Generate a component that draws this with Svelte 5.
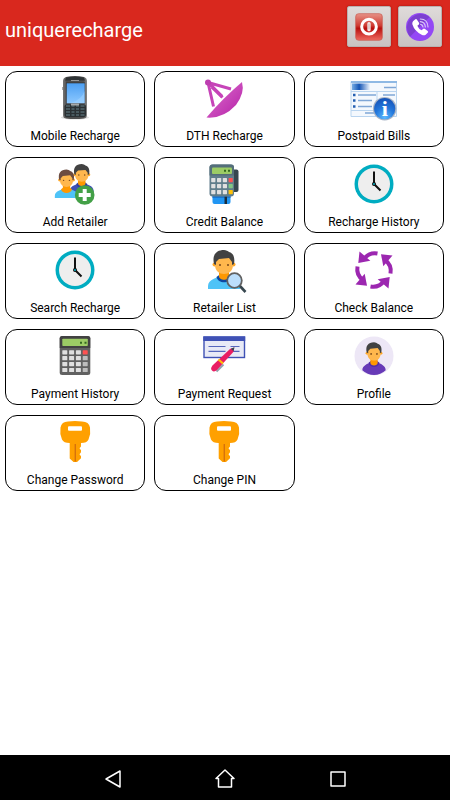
<script>
  const tiles = [
    { label: "Mobile Recharge", icon: "phone" },
    { label: "DTH Recharge", icon: "dish" },
    { label: "Postpaid Bills", icon: "bill" },
    { label: "Add Retailer", icon: "addUser" },
    { label: "Credit Balance", icon: "terminal" },
    { label: "Recharge History", icon: "clock" },
    { label: "Search Recharge", icon: "clock" },
    { label: "Retailer List", icon: "findUser" },
    { label: "Check Balance", icon: "cycle" },
    { label: "Payment History", icon: "calculator" },
    { label: "Payment Request", icon: "cheque" },
    { label: "Profile", icon: "profile" },
    { label: "Change Password", icon: "key" },
    { label: "Change PIN", icon: "key" },
  ];

  const terminalKeys = ["#e0e0e0", "#e0e0e0", "#e0e0e0"];
  const terminalSide = ["#ff5252", "#81c784", "#ffc107"];
</script>

{#snippet person(hair, shirt, collar)}
  <path d="M8 43v-3c0-7 10-8 13-11h6c3 3 13 4 13 11v3z" fill={shirt} />
  <path d="M16.500 31c1.500 7 13.500 7 15 0l-4-3h-7z" fill={collar} />
  <path d="M19 24h10v6c0 5-10 5-10 0z" fill="#ff9800" />
  <circle cx="14.500" cy="18.500" r="2" fill="#ffa726" />
  <circle cx="33.500" cy="18.500" r="2" fill="#ffa726" />
  <path d="M15 13c0-8 18-8 18 0v6c0 12-18 12-18 0z" fill="#ffb74d" />
  <path d="M14 18c-2-9 2-14 10-14 2 0 4 1 5 2 5 1 6 7 5 12l-2 1v-3l-3-4-10 1-3 3v3z" fill={hair} />
  <circle cx="20" cy="19" r="1" fill="#784719" />
  <circle cx="28" cy="19" r="1" fill="#784719" />
{/snippet}

{#snippet icon(name)}
  <svg class="icon" viewBox="0 0 48 48" aria-hidden="true">
    {#if name === "phone"}
      <defs>
        <linearGradient id="screen" x1="0" y1="0" x2="0" y2="1">
          <stop offset="0" stop-color="#4c9ff2" />
          <stop offset="1" stop-color="#8cc8ff" />
        </linearGradient>
        <linearGradient id="shell" x1="0" y1="0" x2="1" y2="0">
          <stop offset="0" stop-color="#777" />
          <stop offset="0.150" stop-color="#4c4c4c" />
          <stop offset="0.850" stop-color="#505050" />
          <stop offset="1" stop-color="#888" />
        </linearGradient>
      </defs>
      <ellipse cx="24" cy="43.500" rx="14" ry="2" fill="#ddd" />
      <rect x="11.500" y="13" width="2" height="3" fill="#555" />
      <path d="M15 3q9-2 18 0 3 1 3 4v34q0 3-3 3.500-9 1-18 0-3-.5-3-3.500V7q0-3 3-4z" fill="url(#shell)" />
      <path d="M15.500 3.500q8.500-1.500 17 0l1.500 3H14z" fill="#303436" />
      <path d="M20 6.500h8" stroke="#999" />
      <rect x="15" y="8.500" width="19" height="21" fill="#333" />
      <rect x="15.700" y="9.300" width="18" height="20" fill="url(#screen)" />
      <path d="M33.500 17v12H20q11-4 13.500-12z" fill="#a5d5ff" opacity="0.500" />
      <rect x="13.500" y="30.500" width="21.500" height="12.500" rx="2" fill="#2a3033" />
      {#each [32, 35, 38, 41] as y}
        <path d="M15 {y}h4M20.500 {y}h3M25 {y}h3M29.500 {y}h4" stroke="#67818a" />
      {/each}
      <path d="M20 30.500h8" stroke="#a8aaaa" stroke-width="2" />
    {:else if name === "dish"}
      <defs>
        <linearGradient id="dish" x1="0" y1="0" x2="1" y2="1">
          <stop offset="0" stop-color="#df72cf" />
          <stop offset="1" stop-color="#b420a7" />
        </linearGradient>
      </defs>
      <path d="M8 8.500l23 6.500M8 8.500l5.500 24M9 9l13.500 14.500" fill="none" stroke="#c644b8" stroke-width="3" />
      <path d="M12 13l10 9.500" stroke="#c644b8" stroke-width="3.500" />
      <circle cx="8" cy="8.500" r="3" fill="#bd3eb0" />
      <path d="M42 8q3 11-6 23Q23 45 6.500 43.500q16-19 35.500-35.500z" fill="url(#dish)" />
    {:else if name === "bill"}
      <defs>
        <linearGradient id="banner" x1="0" y1="0" x2="1" y2="0">
          <stop offset="0" stop-color="#78aee5" />
          <stop offset="0.400" stop-color="#1455b5" />
          <stop offset="1" stop-color="#eff6fd" />
        </linearGradient>
        <radialGradient id="info" cx="0.500" cy="0.900" r="0.900">
          <stop offset="0" stop-color="#5cb9ff" />
          <stop offset="0.500" stop-color="#2478dc" />
          <stop offset="1" stop-color="#1452b8" />
        </radialGradient>
      </defs>
      <path d="M1 7.500h45.500v35H1z" fill="#f4f8fd" stroke="#b9d4ef" />
      <path d="M1 8h46" stroke="#8fb9e4" stroke-width="2" />
      <rect x="2" y="9.500" width="18" height="6.500" fill="url(#banner)" />
      <path d="M1 17.500h46M1 36.500h28M27 18v10" stroke="#b9d4ef" />
      <path d="M34 13.500h12M8 21h18M8 26.500h14M8 32.500h14M33 21h12M15 39h10" stroke="#7fa6d6" stroke-width="1.300" />
      <path d="M3 21h2.500M3 26.500h2.500M3 32.500h2.500" stroke="#235fb2" stroke-width="2.500" />
      <circle cx="34.700" cy="34.700" r="11.800" fill="#a9b4c5" />
      <circle cx="34.700" cy="34.700" r="10.600" fill="url(#info)" />
      <text x="34.700" y="42" text-anchor="middle" class="info">i</text>
    {:else if name === "addUser"}
      <g transform="translate(13 1) scale(0.740)">{@render person("#424242", "#3f51b5", "#303f9f")}</g>
      <g transform="translate(-2 6.500) scale(0.730)">{@render person("#6d4c41", "#4fc3f7", "#ff9800")}</g>
      <circle cx="33.700" cy="35" r="9.800" fill="#43a047" />
      <path d="M33.700 29v12M27.700 35h12" stroke="#fff" stroke-width="4" />
    {:else if name === "terminal"}
      <path d="M34 9.500h2.500q2 0 2 2V30q0 2-2 2H34z" fill="#37474f" />
      <path d="M12.500 35h18v7q0 2-2 2h-14q-2 0-2-2z" fill="#2196f3" />
      <path d="M12.500 36h18v2h-18z" fill="#1976d2" />
      <path d="M24.500 36.500H27V44h-2.500z" fill="#1a2d3d" />
      <path d="M12.500 4.500h18.500q3 0 3 3v26q0 3-3 3H12.500q-3 0-3-3v-26q0-3 3-3z" fill="#607d8b" />
      <path d="M9.500 15.500v-8q0-3 3-3h18.500q3 0 3 3v8z" fill="#546e7a" />
      <rect x="12" y="7.500" width="20" height="6.500" rx="1" fill="#9ccc65" />
      <path d="M24 10.700h2M28 10.700h2" stroke="#33691e" stroke-width="2" />
      {#each terminalSide as side, row}
        {#each [...terminalKeys, side] as fill, col}
          <rect x={11.2 + col * 5.8} y={18 + row * 6} width="4.200" height="4.200" rx="0.600" {fill} />
        {/each}
      {/each}
    {:else if name === "clock"}
      <circle cx="24" cy="24" r="19.500" fill="#00acc1" />
      <circle cx="24" cy="24" r="16" fill="#eee" />
      <path d="M24 24V11.500M24 24l6.500 6.500" stroke="#111" stroke-width="2" />
      <circle cx="24" cy="24" r="2" fill="#111" />
      <circle cx="24" cy="24" r="1" fill="#00acc1" />
    {:else if name === "findUser"}
      {@render person("#424242", "#4fc3f7", "#0d47a1")}
      <path d="M39 39l6.500 7" stroke="#37474f" stroke-width="2.600" />
      <circle cx="34.500" cy="34.500" r="7.300" fill="#bbdefb" stroke="#616161" stroke-width="1.800" />
    {:else if name === "cycle"}
      {#each [0, 90, 180, 270] as turn}
        <g transform="rotate({turn} 24 24)">
          <path d="M27.500 7.500Q19 6 14 13" fill="none" stroke="#9c27b0" stroke-width="4" />
          <path d="M9.500 5.500L8.300 17l12-2.300z" fill="#9c27b0" />
        </g>
      {/each}
    {:else if name === "calculator"}
      <rect x="8.700" y="4" width="30.600" height="39" rx="2.500" fill="#616161" />
      <path d="M8.700 16V6.500q0-2.500 2.500-2.500h25.600q2.500 0 2.500 2.500V16z" fill="#424242" />
      <rect x="11.300" y="6.700" width="25.500" height="7.300" rx="0.800" fill="#9ccc65" />
      <path d="M29 10.800h2M33.500 10.800h2" stroke="#33691e" stroke-width="2" />
      {#each [0, 1, 2, 3] as row}
        {#each [0, 1, 2, 3] as col}
          <rect
            x={11.3 + col * 6.8}
            y={18.2 + row * 5.9}
            width="5"
            height="4.200"
            rx="0.600"
            fill={col < 3 ? "#e0e0e0" : row === 0 ? "#ff5252" : "#bdbdbd"} />
        {/each}
      {/each}
    {:else if name === "cheque"}
      <rect x="4" y="5" width="40.500" height="20.500" fill="#e8eaf6" stroke="#3f51b5" stroke-width="1.400" />
      <path d="M3.300 4.500h41.900V9H3.300z" fill="#3f51b5" />
      <path d="M8.500 14.500h17M8.500 19.300h17M30.500 14.500h9M32 19.300h7.500" stroke="#5667bd" stroke-width="1.200" />
      <path d="M23.500 32.500l-7 7" stroke="#90a4ae" stroke-width="2" />
      <path d="M34.300 15.500l-1 4.500L17 38q-3 2.500-5 .5t.5-5L30 17z" fill="#e91e63" />
      <path d="M34.500 15.300l-1 4-2.800-2.500z" fill="#37474f" />
      <path d="M18.500 27.500l4.500 4" stroke="#ffc107" stroke-width="2.200" />
    {:else if name === "profile"}
      <circle cx="24" cy="24" r="19.500" fill="#ede7f6" />
      <g transform="translate(6.500 7.300) scale(0.730)">
        <path d="M8 42.500c0-7 8-9 11-11h10c3 2 11 4 11 11Q33 49 24 49T8 42.500z" fill="#673ab7" />
        <path d="M16.500 32c2 8 13 8 15 0l-4-3h-7z" fill="#512da8" />
        <path d="M19 24h10v8c0 5-10 5-10 0z" fill="#ff9800" />
        <circle cx="14.500" cy="19" r="2" fill="#ffa726" />
        <circle cx="33.500" cy="19" r="2" fill="#ffa726" />
        <path d="M15 13c0-8 18-8 18 0v7c0 12-18 12-18 0z" fill="#ffb74d" />
        <path d="M14 18c-2-9 2-14 10-14 2 0 4 1 5 2 5 1 6 7 5 12l-2 1v-3l-3-4-10 1-3 3v3z" fill="#424242" />
        <circle cx="20" cy="20" r="1.200" fill="#784719" />
        <circle cx="28" cy="20" r="1.200" fill="#784719" />
      </g>
    {:else if name === "key"}
      <path
        d="M17 3.500q7-1 14 0 7 0 8 6 1 6-1.500 12Q36 25 30 25v3.500l-1.500 1.800 1.500 2v2l-1.500 2 1.500 2v2L26 44h-3.500l-3.800-3.500V25q-6 0-7.700-3.500-2.500-6-1.500-12 1-6 7.500-6z"
        fill="#ffa000" />
      <rect x="17" y="8.300" width="14" height="4.400" rx="1" fill="#fff" />
      <path d="M24.300 26v17.500" stroke="#d6720b" stroke-width="1.400" />
    {/if}
  </svg>
{/snippet}

<div class="screen">
  <header>
    <h1>uniquerecharge</h1>
    <div class="actions">
      <button class="action" aria-label="Log out">
        <svg viewBox="0 0 84 84" aria-hidden="true">
          <defs>
            <linearGradient id="power" x1="0" y1="0" x2="0" y2="1">
              <stop offset="0" stop-color="#e79287" />
              <stop offset="0.450" stop-color="#cf3a31" />
              <stop offset="0.550" stop-color="#b90f0d" />
              <stop offset="1" stop-color="#ef6a60" />
            </linearGradient>
          </defs>
          <rect x="2" y="2" width="80" height="80" rx="9" fill="url(#power)" stroke="#c8574d" stroke-width="2" />
          <circle cx="42" cy="41" r="22" fill="none" stroke="#fff" stroke-width="9" />
          <path d="M42 32v18" stroke="#f4e8e6" stroke-width="10" stroke-linecap="round" />
          <path d="M42 32v17" stroke="#c8b0ae" stroke-width="3" />
        </svg>
      </button>
      <button class="action" aria-label="Call support">
        <svg viewBox="0 0 84 84" aria-hidden="true">
          <circle cx="42" cy="42" r="42" fill="#9448f5" />
          <path d="M12 71A42 42 0 0 1 71 12z" fill="#7c3fd0" />
          <path
            d="M21 25l7-6q3-2 5 1l6 9q2 3-1 6l-4 3q4 10 13 14l4-4q3-3 6 0l8 6q3 3 0 5l-6 6q-5 3-12 0-21-9-28-31-1-5 2-9z"
            fill="#fff" />
          <g fill="none" stroke="#dcc8f8" stroke-width="3.500" stroke-linecap="round">
            <path d="M43 18q22 0 23 24M43 26q14 1 15 16M44 34q6 1 7 8" />
          </g>
        </svg>
      </button>
    </div>
  </header>

  <main>
    {#each tiles as tile}
      <button class="tile">
        {@render icon(tile.icon)}
        <span>{tile.label}</span>
      </button>
    {/each}
  </main>

  <nav>
    <button aria-label="Back">
      <svg viewBox="0 0 24 24"><path d="M19 4v16L5 12z" /></svg>
    </button>
    <button aria-label="Home">
      <svg viewBox="0 0 24 24"><path d="M12 3l9 8.500h-2.500V20h-13v-8.500H3z" /></svg>
    </button>
    <button aria-label="Recent apps">
      <svg viewBox="0 0 24 24"><path d="M5 5h14v14H5z" /></svg>
    </button>
  </nav>
</div>

<style>
  :global(body) {
    background: #fff;
  }

  .screen {
    display: flex;
    flex-direction: column;
    min-height: 100vh;
    font-family: Roboto, "Liberation Sans", sans-serif;
  }

  button {
    margin: 0;
    font: inherit;
    color: inherit;
    cursor: pointer;
  }

  header {
    display: flex;
    align-items: flex-start;
    justify-content: space-between;
    box-sizing: border-box;
    min-height: 66px;
    padding: 6px 8px 0 5px;
    background: #d9281e;
  }

  h1 {
    margin: 0;
    padding-top: 12px;
    font-size: 20px;
    font-weight: 400;
    line-height: 24px;
    color: #fff;
  }

  .actions {
    display: flex;
    gap: 7px;
  }

  .action {
    display: flex;
    align-items: center;
    justify-content: center;
    box-sizing: border-box;
    width: 44px;
    height: 41px;
    padding: 0;
    border: 1px solid #b9b2b0;
    border-radius: 2px;
    background: linear-gradient(#dfdbda, #c9c3c2);
    box-shadow: 0 0 2px #9c0d08;
  }

  .action svg {
    width: 28px;
    height: 28px;
  }

  main {
    display: grid;
    flex: 1;
    grid-template-columns: repeat(3, 1fr);
    align-content: start;
    gap: 10px 9px;
    padding: 5px 6px 10px 5px;
  }

  .tile {
    display: flex;
    flex-direction: column;
    align-items: center;
    box-sizing: border-box;
    height: 76px;
    padding: 2px 0 0;
    border: 1px solid #000;
    border-radius: 12px;
    background: #fff;
    color: #000;
  }

  .tile span {
    padding-top: 6px;
    font-size: 12px;
    line-height: 16px;
  }

  .icon {
    flex: none;
    width: 48px;
    height: 48px;
  }

  .info {
    font: bold 22px "Liberation Serif", serif;
    fill: #fff;
  }

  nav {
    display: flex;
    justify-content: center;
    height: 45px;
    background: #000;
  }

  nav button {
    display: flex;
    align-items: center;
    justify-content: center;
    width: 25%;
    padding: 2px 0 0;
    border: 0;
    background: none;
  }

  nav svg {
    width: 24px;
    height: 24px;
    fill: none;
    stroke: #fff;
    stroke-width: 1.5;
    stroke-linejoin: round;
  }
</style>
